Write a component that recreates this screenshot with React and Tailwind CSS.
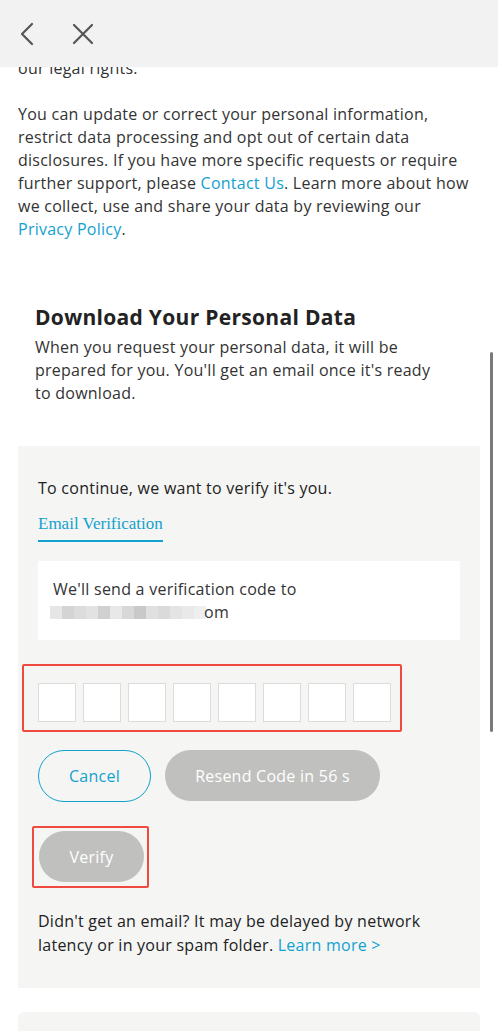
import React from "react";

const font = { fontFamily: "'Open Sans', 'Noto Sans', sans-serif" };

function Blur() {
  const shades = ["#e6e6e6", "#d4d4d4", "#dcdcdc", "#e2e2e2", "#d0d0d0", "#e8e8e8", "#d8d8d8", "#c9c9c9", "#e0e0e0", "#dadada", "#e4e4e4", "#e9e9e9", "#eeeeee"];
  return (
    <span className="-ml-[3px] inline-flex h-[13px] align-middle">
      {shades.map((c, i) => (
        <span key={i} className="h-full w-[12px]" style={{ background: c }} />
      ))}
    </span>
  );
}

export default function App() {
  return (
    <div className="relative h-[1031px] w-[498px] overflow-hidden bg-white tracking-[0.25px] text-[#333]" style={font}>
      <div className="absolute left-0 top-0 z-10 flex h-[67px] w-full items-center bg-[#f2f2f2]">
        <svg className="ml-[18px]" width="20" height="26" viewBox="0 0 20 26" fill="none" stroke="#555" strokeWidth="2.2" strokeLinecap="round" strokeLinejoin="round">
          <path d="M14 3 L4 13 L14 23" />
        </svg>
        <svg className="ml-[33px]" width="24" height="24" viewBox="0 0 24 24" fill="none" stroke="#555" strokeWidth="2.2" strokeLinecap="round">
          <path d="M3 3 L21 21 M21 3 L3 21" />
        </svg>
      </div>

      <div className="absolute right-[5px] top-[352px] z-10 h-[380px] w-[3px] rounded-full bg-[#7a7a7a]" />

      <div className="pt-[57px]">
        <div className="whitespace-nowrap px-[18px] text-[16px] leading-[23px]">
          <p>our legal rights.</p>
          <p className="mt-[23px]">
            You can update or correct your personal information,
            <br />
            restrict data processing and opt out of certain data
            <br />
            disclosures. If you have more specific requests or require
            <br />
            further support, please <span className="text-[#13a1cf]">Contact Us</span>. Learn more about how
            <br />
            we collect, use and share your data by reviewing our
            <br />
            <span className="text-[#13a1cf]">Privacy Policy</span>.
          </p>
        </div>

        <div className="mt-[62px] whitespace-nowrap px-[35px]">
          <h2 className="text-[21px] font-bold leading-[28px] tracking-[0.3px] text-[#222]">Download Your Personal Data</h2>
          <p className="mt-[5px] text-[16px] leading-[23px] text-[#333]">
            When you request your personal data, it will be
            <br />
            prepared for you. You'll get an email once it's ready
            <br />
            to download.
          </p>
        </div>

        <div className="mx-[18px] mt-[41px] bg-[#f5f5f4] px-[20px] pb-[31px] pt-[31px]">
          <p className="text-[16px] leading-[23px] text-[#222]">To continue, we want to verify it's you.</p>
          <div className="mt-[14px] inline-block border-b-2 border-[#13a1cf] pb-[6px] text-[17px] leading-[20px] tracking-normal text-[#13a1cf]" style={{ fontFamily: "'Liberation Serif', serif" }}>
            Email Verification
          </div>
          <div className="mt-[19px] bg-white px-[15px] pb-[16px] pt-[17px] text-[16px] leading-[23px] text-[#333]">
            <p>We'll send a verification code to</p>
            <p className="flex items-center">
              <Blur />
              <span className="-ml-[2px]">om</span>
            </p>
          </div>

          <div className="relative mt-[43px] flex gap-[7px]">
            <div className="pointer-events-none absolute -left-[16px] -top-[19px] h-[68px] w-[380px] rounded-[2px] border-2 border-[#ee4a3f]" />
            {Array.from({ length: 8 }).map((_, i) => (
              <div key={i} className="h-[39px] w-[38px] border border-[#dcdcdc] bg-white" />
            ))}
          </div>

          <div className="mt-[28px] flex gap-[14px]">
            <button className="h-[52px] w-[113px] rounded-full border-[1.5px] border-[#13a1cf] text-[16px] tracking-[0.25px] text-[#13a1cf]">Cancel</button>
            <button className="h-[51px] w-[215px] rounded-full bg-[#c0c1be] text-[16px] tracking-[0.25px] text-white">Resend Code in 56 s</button>
          </div>

          <div className="relative mt-[29px] ml-[1px]">
            <div className="pointer-events-none absolute -left-[7px] -top-[5px] h-[62px] w-[117px] rounded-[2px] border-2 border-[#ee4a3f]" />
            <button className="h-[51px] w-[105px] rounded-full bg-[#c0c1be] text-[16px] tracking-[0.25px] text-white">Verify</button>
          </div>

          <p className="mt-[27px] whitespace-nowrap text-[16px] leading-[24px] text-[#222]">
            Didn't get an email? It may be delayed by network
            <br />
            latency or in your spam folder. <span className="text-[#13a1cf]">Learn more &gt;</span>
          </p>
        </div>

        <div className="mx-[18px] mt-[24px] h-[40px] rounded-t-[6px] bg-[#f5f5f4]" />
      </div>
    </div>
  );
}
